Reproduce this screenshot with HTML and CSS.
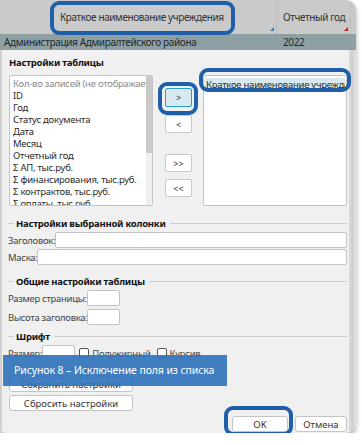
FILE: index.html
```html
<!DOCTYPE html>
<html lang="ru">
<head>
<meta charset="utf-8">
<link rel="stylesheet" href="styles.css">
</head>
<body>
<div class="shot">
  <div class="grid-head">
    <div class="hcell hc1">Краткое наименование учреждения<span class="tri tri-blue"></span></div>
    <div class="hcell hc2">Отчетный год<span class="tri tri-red"></span></div>
    <div class="hcell hc3"></div>
  </div>
  <div class="grid-row">
    <div class="rcell rc1">Администрация Адмиралтейского района</div>
    <div class="rcell rc2">2022</div>
  </div>
  <div class="dialog">
    <div class="edge-left"></div>
    <div class="main">
      <div class="title">Настройки таблицы</div>
      <div class="lists">
        <div class="listbox left-list">
          <div class="items">
            <div class="item muted">Кол-во записей (не отображается)</div>
            <div class="item">ID</div>
            <div class="item">Год</div>
            <div class="item">Статус документа</div>
            <div class="item">Дата</div>
            <div class="item">Месяц</div>
            <div class="item">Отчетный год</div>
            <div class="item">Σ АП, тыс.руб.</div>
            <div class="item">Σ финансирования, тыс.руб.</div>
            <div class="item">Σ контрактов, тыс.руб.</div>
            <div class="item">Σ оплаты, тыс.руб.</div>
          </div>
          <div class="scroll"><div class="thumb"></div></div>
        </div>
        <div class="movers">
          <button class="mv mv-active">&gt;</button>
          <button class="mv">&lt;</button>
          <button class="mv mv-gap">&gt;&gt;</button>
          <button class="mv">&lt;&lt;</button>
        </div>
        <div class="listbox right-list">
          <div class="item sel">Краткое наименование учреждения</div>
        </div>
      </div>

      <div class="legend l1"><span>Настройки выбранной колонки</span></div>
      <div class="frow f-title"><label>Заголовок:</label><div class="inp grow"></div></div>
      <div class="frow f-mask"><label>Маска:</label><div class="inp grow"></div></div>

      <div class="legend l2"><span>Общие настройки таблицы</span></div>
      <div class="frow f-page"><label>Размер страницы:</label><div class="inp small"></div></div>
      <div class="frow f-head"><label>Высота заголовка:</label><div class="inp small"></div></div>

      <div class="legend l3"><span>Шрифт</span></div>
      <div class="frow f-font"><label>Размер:</label><div class="inp small"></div><span class="cb"></span><span class="cbl">Полужирный</span><span class="cb"></span><span class="cbl">Курсив</span></div>

      <button class="btn wide b-save">Сохранить настройки</button>
      <button class="btn wide b-reset">Сбросить настройки</button>

      <div class="footer">
        <button class="btn ok">OK</button>
        <button class="btn cancel">Отмена</button>
      </div>
    </div>
    <div class="edge-right"></div>
  </div>

  <div class="ring ring-head"></div>
  <div class="ring ring-btn"></div>
  <div class="ring ring-item"></div>
  <div class="ring ring-ok"></div>
  <div class="caption">Рисунок 8 – Исключение поля из списка</div>
</div>
</body>
</html>
```

FILE: styles.css
```css
* { box-sizing: border-box; }
html, body { margin: 0; padding: 0; background: #ffffff; }
body { font-family: "Noto Sans", "Open Sans", sans-serif; font-size: 9.5px; letter-spacing: -0.25px; color: #2b2b2b; }

.shot {
  position: relative;
  width: 356px;
  height: 433px;
  border-radius: 0 10px 10px 6px;
  overflow: hidden;
  box-shadow: 0 3px 5px rgba(0,0,0,0.35);
  background: #f0f0f0;
  display: flex;
  flex-direction: column;
}

.grid-head {
  height: 34px;
  background: #cacaca;
  display: flex;
  flex: none;
  font-size: 10px;
  letter-spacing: -0.4px;
  color: #333;
}
.hcell { position: relative; display: flex; align-items: center; height: 100%; white-space: nowrap; }
.hc1 { width: 277px; padding-left: 60px; border-right: 1px solid #bdbdbd; }
.hc2 { width: 74px; padding-left: 6px; border-right: 1px solid #bdbdbd; }
.hc3 { flex: 1; }
.tri { position: absolute; right: 2px; bottom: 3px; width: 0; height: 0; border-left: 4px solid transparent; border-bottom: 4px solid #2a7fc0; }
.tri-red { border-bottom-color: #d01010; }

.grid-row {
  height: 16px;
  flex: none;
  background: #8fa0a4;
  display: flex;
  align-items: center;
  color: #1f2a2a;
  font-size: 10px;
  letter-spacing: -0.35px;
  white-space: nowrap;
}
.rc1 { width: 277px; padding-left: 4px; }
.rc2 { padding-left: 6px; }

.dialog { flex: 1; display: flex; }
.edge-left { width: 2px; background: #cfcfcf; }
.edge-right { width: 7px; background: linear-gradient(to right, #dcdcdc 0, #cdcdcd 4px, #e2e2e2 6px); }
.main { flex: 1; padding: 6px 2px 0 7px; display: flex; flex-direction: column; }

.title { font-weight: bold; height: 13px; line-height: 13px; color: #111; }

.lists { display: flex; margin-top: 6px; height: 131px; }
.listbox { background: #fff; border: 1px solid #c4c4c4; border-radius: 2px; overflow: hidden; }
.left-list { width: 144px; display: flex; }
.items { flex: 1; padding: 2px 0 0 3px; overflow: hidden; white-space: nowrap; }
.item { height: 12px; line-height: 12px; white-space: nowrap; overflow: hidden; }
.muted { color: #8a8a8a; }
.scroll { width: 6px; background: #f0f0f0; flex: none; }
.thumb { height: 77px; background: #c9c9c9; }
.movers { width: 27px; margin-left: 12px; display: flex; flex-direction: column; padding-top: 13px; flex: none; }
.mv { width: 27px; height: 18px; margin-bottom: 8px; border: 1px solid #c8c8c8; border-radius: 2px; background: #fff; font: inherit; font-size: 9px; color: #333; padding: 0; }
.mv-active { background: #d6e9ef; border-color: #2a9ac8; height: 19px; }
.mv-gap { margin-top: 13px; margin-bottom: 7px; }
.right-list { width: 144px; margin-left: 11px; padding: 2px 1px; }
.sel { background: #d7e9ee; height: 14px; line-height: 14px; padding-left: 1px; }

.legend { display: flex; align-items: center; height: 12px; padding-left: 6px; font-weight: bold; color: #111; white-space: nowrap; }
.legend::before { content: ""; width: 6px; height: 1px; background: #cccccc; margin-right: 1px; margin-left: -7px; }
.legend::after { content: ""; flex: 1; height: 1px; background: #cccccc; margin-left: 3px; }
.legend span { padding: 0 1px; }
.l1 { margin-top: 11px; }
.l2 { margin-top: 10px; }
.l3 { margin-top: 5px; }

.frow { display: flex; align-items: center; height: 16px; color: #444; white-space: nowrap; }
.frow label { font-size: 9.5px; letter-spacing: -0.3px; }
.f-title { margin-top: 3px; margin-left: -1px; }
.f-mask { margin-top: 1px; margin-left: -1px; }
.f-page { margin-top: 3px; margin-left: -1px; }
.f-head { margin-top: 3px; margin-left: -1px; }
.f-font { margin-top: 3px; margin-left: -1px; }
.inp { height: 16px; background: #fff; border: 1px solid #c4c4c4; border-radius: 2px; flex: none; }
.grow { flex: 1; }
.small { width: 33px; }
.cb { width: 10px; height: 10px; border: 1px solid #555; border-radius: 2px; background: #fff; margin: 0 3px 0 4px; flex: none; }
.cbl { margin-right: 2px; }

.btn { font: inherit; color: #333; background: #fff; border: 1px solid #c4c4c4; border-radius: 3px; padding: 0; }
.wide { width: 124px; height: 15px; line-height: 13px; }
.b-save { margin-top: 16px; }
.b-reset { margin-top: 3px; height: 16px; }
.footer { display: flex; justify-content: flex-end; margin-top: 5px; gap: 7px; }
.ok { width: 56px; height: 16px; }
.cancel { width: 52px; height: 16px; }

.ring { position: absolute; border: 4px solid #1f5fa9; border-radius: 9px; pointer-events: none; }
.ring-head { left: 50px; top: 1px; width: 185px; height: 34px; }
.ring-btn { left: 158px; top: 82px; width: 40px; height: 33px; }
.ring-item { left: 199px; top: 68px; width: 152px; height: 24px; }
.ring-ok { left: 224px; top: 406px; width: 69px; height: 30px; }

.caption {
  position: absolute;
  left: 3px; top: 355px;
  width: 224px; height: 31px;
  background: rgba(49,116,188,0.92);
  color: #fff;
  font-size: 10.5px;
  letter-spacing: -0.1px;
  line-height: 31px;
  padding-left: 11px;
  white-space: nowrap;
}
```
